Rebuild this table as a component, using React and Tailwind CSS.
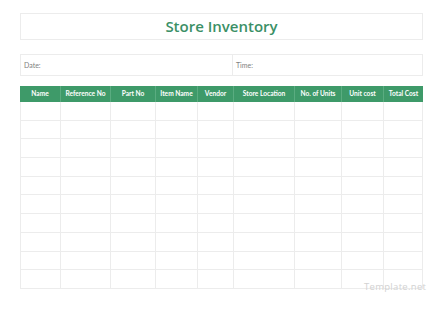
export default function App() {
  const cols = ["Name", "Reference No", "Part No", "Item Name", "Vendor", "Store Location", "No. of Units", "Unit cost", "Total Cost"];
  const grid = "grid grid-cols-[40px_50px_45px_42px_36px_61px_47px_42px_40px]";
  const rows = Array.from({ length: 10 });
  return (
    <div className="w-[440px] h-[310px] bg-white relative" style={{ fontFamily: "Lato, 'Open Sans', sans-serif" }}>
      <div className="pt-[13px] pl-[20px]">
        <div className="w-[403px] h-[27px] border border-[#ececec] flex items-center justify-center">
          <span className="text-[15px] font-semibold text-[#3b9066] leading-none" style={{ fontFamily: "'Open Sans', sans-serif" }}>Store Inventory</span>
        </div>
        <div className="mt-[14px] w-[403px] h-[22px] border border-[#ececec] flex">
          <div className="w-[212px] border-r border-[#ececec] flex items-center pl-[3px] text-[7px] text-[#808080]">Date:</div>
          <div className="flex-1 flex items-center pl-[3px] text-[7px] text-[#808080]">Time:</div>
        </div>
        <div className="mt-[10px] w-[403px]">
          <div className={`${grid} h-[16px] bg-[#3e9a69]`}>
            {cols.map((c, i) => (
              <div key={c} className={`flex items-center justify-center text-white font-bold text-[6.6px] whitespace-nowrap ${i > 0 ? "border-l border-[#5aac80]" : ""}`}>{c}</div>
            ))}
          </div>
          {rows.map((_, r) => (
            <div key={r} className={`${grid} h-[18.7px] border-b border-[#ececec]`}>
              {cols.map((c, i) => (
                <div key={c} className={`border-l border-[#ececec] ${i === cols.length - 1 ? "border-r" : ""}`} />
              ))}
            </div>
          ))}
        </div>
      </div>
      <div className="absolute left-[364px] top-[280px] text-[9.5px] text-[#d2d2d2] tracking-[0.3px]" style={{ fontFamily: "'Open Sans', sans-serif" }}>Template.net</div>
    </div>
  );
}
